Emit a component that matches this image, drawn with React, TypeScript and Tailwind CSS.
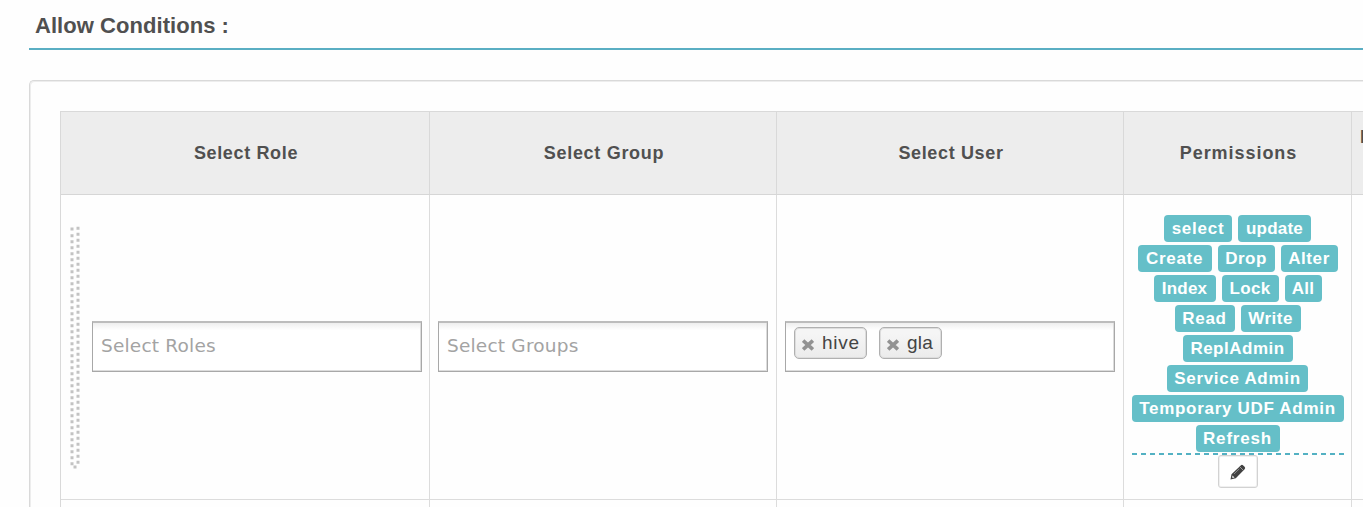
import type { ReactNode } from "react";

const sans = "font-['Liberation_Sans',Arial,sans-serif]";

function Heading({ children, className = "" }: { children: ReactNode; className?: string }) {
  return (
    <div className={`flex shrink-0 items-center justify-center border-r border-[#d9d9d9] pb-px pl-[2px] text-[18px] font-bold leading-6 text-[#505050] ${className}`}>
      {children}
    </div>
  );
}

const badgeRows = [
  [
    { label: "select", size: "w-[68px] tracking-[0.75px]" },
    { label: "update", size: "w-[73px] tracking-[0.2px]" },
  ],
  [
    { label: "Create", size: "w-[74px] tracking-[0.7px]" },
    { label: "Drop", size: "w-[57px] tracking-[0.5px]" },
    { label: "Alter", size: "w-[57px] tracking-[0.6px]" },
  ],
  [
    { label: "Index", size: "w-[62px] tracking-[0.2px]" },
    { label: "Lock", size: "w-[57px] tracking-[0.3px]" },
    { label: "All", size: "w-[37px] tracking-[0.2px]" },
  ],
  [
    { label: "Read", size: "w-[60px] tracking-[0.7px]" },
    { label: "Write", size: "w-[60px] tracking-[0.5px]" },
  ],
  [{ label: "ReplAdmin", size: "w-[110px] tracking-[0.5px]" }],
  [{ label: "Service Admin", size: "w-[141px] tracking-[0.7px]" }],
  [{ label: "Temporary UDF Admin", size: "w-[212px] tracking-[0.7px]" }],
  [{ label: "Refresh", size: "w-[84px] tracking-[0.8px]" }],
];

function DragHandle() {
  return (
    <svg width="10" height="244" viewBox="0 0 10 244" className="mt-[31px] shrink-0 self-start" fill="none" stroke="#c3c3c3" strokeWidth="3">
      <path d="M2 1.5V4.5" />
      <path d="M2 8.2V239.5" strokeDasharray="3 3" />
      <path d="M8 .8V238" strokeDasharray="3 3" />
      <path d="M3.5 241H6.5" />
    </svg>
  );
}

function Field({ children, className = "" }: { children: ReactNode; className?: string }) {
  return (
    <div className={`mt-[126px] flex h-[51px] w-[330px] shrink-0 border-x-[1px] border-b-[1px] border-t-2 border-b-[#a8a8a8] border-t-[#bcbcbc] border-x-[#a8a8a8] bg-[linear-gradient(#eeeeee,#ffffff_15%)] shadow-[inset_-1px_-1px_0_#dcdcdc] ${className}`}>
      {children}
    </div>
  );
}

function Placeholder({ children }: { children: ReactNode }) {
  return (
    <span className="pl-[8px] font-['DejaVu_Sans',sans-serif] text-[18.5px] leading-[46px] tracking-[0.2px] text-[#a3a3a3]">{children}</span>
  );
}

function Token({ label, size }: { label: string; size: string }) {
  return (
    <span className={`flex h-8 items-center rounded-[5px] border border-[#b0b0b0] bg-[linear-gradient(#f5f5f5_20%,#ebebeb)] pl-[7px] text-[19px] leading-6 text-[#444] shadow-[inset_0_0_0_1px_#dddddd] ${size}`}>
      <svg width="12" height="12" viewBox="0 0 12 12" className="mr-[8px] mt-1 shrink-0" stroke="#929292" strokeWidth="3.6" strokeLinecap="square">
        <path d="M2.5 2.8L9.5 9.2M9.5 2.8L2.5 9.2" />
      </svg>
      {label}
    </span>
  );
}

export default function App() {
  return (
    <main className={`h-[507px] w-full overflow-hidden bg-[#fefefe] pl-[29px] ${sans}`}>
      <h1 className="h-[50px] border-b-2 border-[#5aaec3] pl-[6px] pt-[11px] text-[22px] font-bold leading-[30px] tracking-[0.05px] text-[#505050]">
        Allow Conditions :
      </h1>
      <section className="mt-[30px] h-[440px] rounded-tl-[5px] border-l border-t border-[#d9d9d9] pl-[30px] pt-[30px] shadow-[inset_1px_1px_0_#ededed]">
        <div className="w-[1400px] border-l border-t border-[#d9d9d9]">
          <div className="flex h-[83px] border-b border-[#d6d6d6] bg-[#ededed]">
            <Heading className="w-[369px] tracking-[0.65px]">Select Role</Heading>
            <Heading className="w-[347px] tracking-[0.7px]">Select Group</Heading>
            <Heading className="w-[347px] tracking-[0.65px]">Select User</Heading>
            <Heading className="w-[228px] tracking-[0.95px]">Permissions</Heading>
            <div className="w-[110px] shrink-0 pl-[8px] pt-[13px] text-[18px] font-bold leading-6 tracking-[0.8px] text-[#505050]">Delegate</div>
          </div>
          <div className="flex h-[305px] border-b border-[#dcdcdc]">
            <div className="flex w-[369px] shrink-0 border-r border-[#dcdcdc] pl-[9px]">
              <DragHandle />
              <Field className="ml-[12px]">
                <Placeholder>Select Roles</Placeholder>
              </Field>
            </div>
            <div className="flex w-[347px] shrink-0 border-r border-[#dcdcdc] pl-[8px]">
              <Field>
                <Placeholder>Select Groups</Placeholder>
              </Field>
            </div>
            <div className="flex w-[347px] shrink-0 border-r border-[#dcdcdc] pl-[8px]">
              <Field className="gap-[12px] pl-[8px] pt-1">
                <Token label="hive" size="w-[73px] tracking-[0.7px]" />
                <Token label="gla" size="w-[63px] tracking-[0.2px]" />
              </Field>
            </div>
            <div className="flex w-[228px] shrink-0 flex-col items-center border-r border-[#dcdcdc] pt-[20px]">
              <div className="flex flex-col items-center gap-[3px]">
                {badgeRows.map((row) => (
                  <div key={row[0].label} className="flex gap-[6px]">
                    {row.map(({ label, size }) => (
                      <span key={label} className={`flex h-[27px] items-center justify-center whitespace-nowrap rounded-[4px] bg-[#65bfc8] text-[17px] font-bold leading-[27px] text-white ${size}`}>
                        {label}
                      </span>
                    ))}
                  </div>
                ))}
              </div>
              <svg width="212" height="2" viewBox="0 0 212 2" className="mt-[1px] shrink-0">
                <path d="M0 1H212" stroke="#53b1c3" strokeWidth="2" strokeDasharray="5 4" />
              </svg>
              <button aria-label="Edit permissions" className="flex h-[33px] w-10 shrink-0 items-center justify-center rounded-[3px] border border-[#d2d2d2] bg-white shadow-[inset_0_0_0_1px_#f0f0f0]">
                <svg width="16" height="16" viewBox="0 0 16 16">
                  <path d="M.5 15.5L1.5 10.2L10.7 1.4Q12 .2 13.2 1.4L14.6 2.7Q15.8 4 14.6 5.3L5.8 14.3Z" fill="#424242" />
                  <path d="M9.8 2.8L13.2 6.2" stroke="#b0b0b0" strokeWidth=".8" />
                  <path d="M4 10L9.3 4.8" stroke="#a0a0a0" strokeWidth=".8" />
                  <path d="M2.6 11.6L4.5 13.4L2.7 13.9L2.1 13.3Z" fill="#eeeeee" />
                </svg>
              </button>
            </div>
          </div>
          <div className="flex h-12">
            <div className="w-[369px] shrink-0 border-r border-[#dcdcdc]" />
            <div className="w-[347px] shrink-0 border-r border-[#dcdcdc]" />
            <div className="w-[347px] shrink-0 border-r border-[#dcdcdc]" />
            <div className="w-[228px] shrink-0 border-r border-[#dcdcdc]" />
          </div>
        </div>
      </section>
    </main>
  );
}
